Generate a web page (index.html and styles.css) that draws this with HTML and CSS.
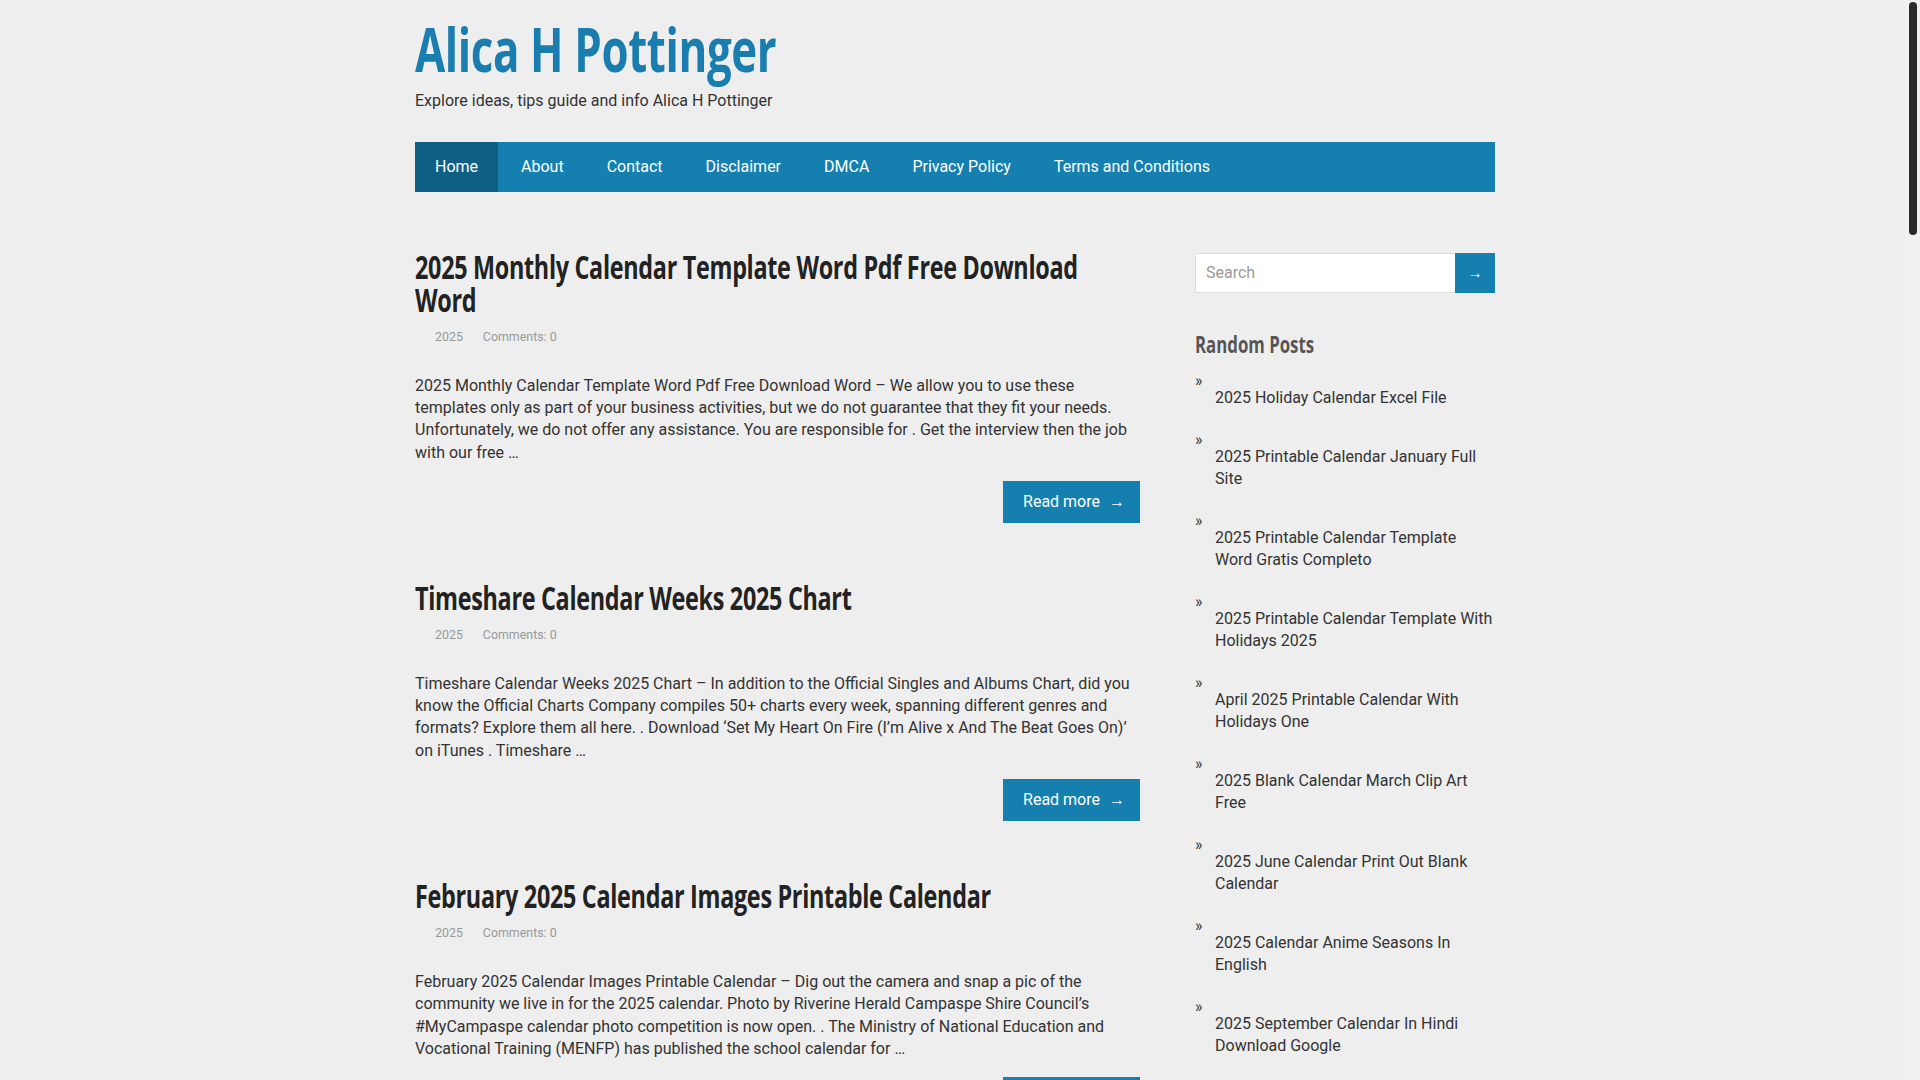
FILE: index.html
```html
<!DOCTYPE html>
<html lang="en">
<head>
<meta charset="utf-8">
<title>Alica H Pottinger</title>
<link rel="stylesheet" href="styles.css">
</head>
<body>
<div class="page">
  <header class="site-header">
    <h1 class="site-title"><a href="#">Alica H Pottinger</a></h1>
    <p class="tagline">Explore ideas, tips guide and info Alica H Pottinger</p>
  </header>

  <nav class="main-nav">
    <ul>
      <li class="active"><a href="#">Home</a></li>
      <li><a href="#">About</a></li>
      <li><a href="#">Contact</a></li>
      <li><a href="#">Disclaimer</a></li>
      <li><a href="#">DMCA</a></li>
      <li><a href="#">Privacy Policy</a></li>
      <li><a href="#">Terms and Conditions</a></li>
    </ul>
  </nav>

  <div class="content-wrap">
    <main class="posts">
      <article class="post">
        <h2 class="post-title"><a href="#">2025 Monthly Calendar Template Word Pdf Free Download Word</a></h2>
        <div class="post-meta"><span class="meta-item">2025</span><span class="meta-item">Comments: 0</span></div>
        <p class="excerpt">2025 Monthly Calendar Template Word Pdf Free Download Word &#8211; We allow you to use these templates only as part of your business activities, but we do not guarantee that they fit your needs. Unfortunately, we do not offer any assistance. You are responsible for . Get the interview then the job with our free &#8230;</p>
        <div class="more-row"><a class="read-more" href="#">Read more <span class="arrow">&#8594;</span></a></div>
      </article>

      <article class="post">
        <h2 class="post-title"><a href="#">Timeshare Calendar Weeks 2025 Chart</a></h2>
        <div class="post-meta"><span class="meta-item">2025</span><span class="meta-item">Comments: 0</span></div>
        <p class="excerpt">Timeshare Calendar Weeks 2025 Chart &#8211; In addition to the Official Singles and Albums Chart, did you know the Official Charts Company compiles 50+ charts every week, spanning different genres and formats? Explore them all here. . Download &#8216;Set My Heart On Fire (I&#8217;m Alive x And The Beat Goes On)&#8217; on iTunes . Timeshare &#8230;</p>
        <div class="more-row"><a class="read-more" href="#">Read more <span class="arrow">&#8594;</span></a></div>
      </article>

      <article class="post">
        <h2 class="post-title"><a href="#">February 2025 Calendar Images Printable Calendar</a></h2>
        <div class="post-meta"><span class="meta-item">2025</span><span class="meta-item">Comments: 0</span></div>
        <p class="excerpt">February 2025 Calendar Images Printable Calendar &#8211; Dig out the camera and snap a pic of the community we live in for the 2025 calendar. Photo by Riverine Herald Campaspe Shire Council&#8217;s #MyCampaspe calendar photo competition is now open. . The Ministry of National Education and Vocational Training (MENFP) has published the school calendar for &#8230;</p>
        <div class="more-row"><a class="read-more" href="#">Read more <span class="arrow">&#8594;</span></a></div>
      </article>
    </main>

    <aside class="sidebar">
      <form class="search-form" action="#">
        <input class="search-input" type="text" placeholder="Search">
        <button class="search-btn" type="button">&#8594;</button>
      </form>

      <section class="widget">
        <h3 class="widget-title">Random Posts</h3>
        <ul class="random-list">
          <li><a href="#">2025 Holiday Calendar Excel File</a></li>
          <li><a href="#">2025 Printable Calendar January Full Site</a></li>
          <li><a href="#">2025 Printable Calendar Template Word Gratis Completo</a></li>
          <li><a href="#">2025 Printable Calendar Template With Holidays 2025</a></li>
          <li><a href="#">April 2025 Printable Calendar With Holidays One</a></li>
          <li><a href="#">2025 Blank Calendar March Clip Art Free</a></li>
          <li><a href="#">2025 June Calendar Print Out Blank Calendar</a></li>
          <li><a href="#">2025 Calendar Anime Seasons In English</a></li>
          <li><a href="#">2025 September Calendar In Hindi Download Google</a></li>
        </ul>
      </section>
    </aside>
  </div>
</div>
<div class="scrollbar"><div class="scrollbar-thumb"></div></div>
</body>
</html>
```

FILE: styles.css
```css
* { box-sizing: border-box; }

html, body {
  margin: 0;
  padding: 0;
  background: #eeeeee;
}

body {
  font-family: Roboto, "Liberation Sans", Arial, sans-serif;
  font-size: 16px;
  line-height: 1.4;
  color: #333333;
  padding-right: 10px;
}

a { color: inherit; text-decoration: none; }

.page {
  width: 1080px;
  margin: 0 auto;
  padding-bottom: 60px;
}

.site-header {
  padding-top: 17px;
}

.site-title {
  margin: 0;
  font-family: "Open Sans", "Noto Sans", sans-serif;
  font-weight: 700;
  font-size: 60px;
  line-height: 64px;
  letter-spacing: -0.5px;
  color: #1a7db0;
  width: 137%;
  transform: scaleX(0.73);
  transform-origin: left top;
  white-space: nowrap;
}

.tagline {
  margin: 9px 0 0;
  font-size: 16px;
  line-height: 22px;
  color: #333333;
}

.main-nav {
  margin-top: 30px;
  background: #157faf;
  height: 50px;
}

.main-nav ul {
  list-style: none;
  margin: 0;
  padding: 0;
  display: flex;
  height: 100%;
}

.main-nav li {
  margin-right: 3px;
}

.main-nav li a {
  display: block;
  height: 50px;
  line-height: 50px;
  padding: 0 20px;
  color: #ffffff;
  font-size: 16px;
}

.main-nav li.active a {
  background: #0f5f84;
}

.content-wrap {
  display: flex;
  justify-content: space-between;
  align-items: flex-start;
  margin-top: 58px;
}

.posts {
  width: 725px;
}

.post {
  margin-bottom: 58px;
}

.post-title {
  margin: 0;
  font-family: "Open Sans", "Noto Sans", sans-serif;
  font-weight: 700;
  font-size: 32px;
  line-height: 33px;
  letter-spacing: -0.4px;
  color: #222222;
  width: 137%;
  transform: scaleX(0.73);
  transform-origin: left top;
}

.post-meta {
  margin-top: 11.5px;
  display: flex;
  font-size: 12.4px;
  line-height: 18px;
  color: #999999;
}

.meta-item {
  padding-left: 20px;
}

.excerpt {
  margin: 29px 0 0;
  font-size: 16px;
  line-height: 22.4px;
  color: #333333;
}

.more-row {
  margin-top: 17px;
  display: flex;
  justify-content: flex-end;
}

.read-more {
  display: inline-flex;
  align-items: center;
  height: 42px;
  padding: 0 15px 0 20px;
  background: #157faf;
  color: #ffffff;
  font-size: 16px;
}

.read-more .arrow {
  margin-left: 9px;
  font-size: 16px;
}

.sidebar {
  width: 300px;
  margin-top: 2.5px;
}

.search-form {
  display: flex;
  height: 40px;
  margin: 0;
}

.search-input {
  flex: 1;
  min-width: 0;
  height: 40px;
  border: 1px solid #dddddd;
  border-right: none;
  background: #ffffff;
  padding: 0 10px;
  font-family: Roboto, "Liberation Sans", sans-serif;
  font-size: 16px;
  color: #333333;
  outline: none;
}

.search-input::placeholder {
  color: #999999;
}

.search-btn {
  width: 40px;
  height: 40px;
  border: none;
  background: #157faf;
  color: #ffffff;
  font-family: Roboto, "Liberation Sans", sans-serif;
  font-size: 15px;
  padding: 0;
  cursor: pointer;
}

.widget-title {
  margin: 38px 0 0;
  font-family: "Open Sans", "Noto Sans", sans-serif;
  font-weight: 700;
  font-size: 23px;
  line-height: 26px;
  color: #555555;
  width: 137%;
  transform: scaleX(0.73);
  transform-origin: left top;
}

.random-list {
  list-style: none;
  margin: 13px 0 0;
  padding: 0;
}

.random-list li {
  position: relative;
  padding: 17px 0 0 20px;
  margin-bottom: 20px;
  font-size: 16px;
  line-height: 22px;
  color: #333333;
}

.random-list li::before {
  content: "\00BB";
  position: absolute;
  left: 0;
  top: 0;
  font-size: 16px;
  line-height: 22px;
  color: #333333;
}

.scrollbar {
  position: fixed;
  top: 0;
  right: 0;
  width: 15px;
  height: 100vh;
  background: #f1f1f1;
}

.scrollbar-thumb {
  margin: 2px auto 0;
  width: 8px;
  height: 233px;
  border-radius: 4px;
  background: #2b2b2b;
}
```
